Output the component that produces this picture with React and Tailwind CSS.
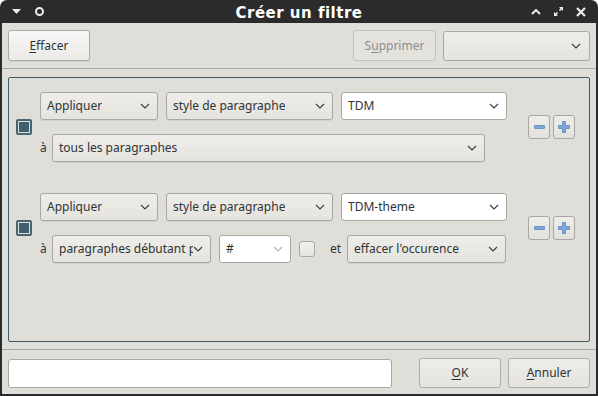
import React from 'react';

const font = { fontFamily: '"Noto Sans", "Open Sans", sans-serif' };

function Chevron({ light = false }) {
  return (
    <svg width="10" height="6" viewBox="0 0 10 6" className="shrink-0">
      <path d="M1 1 L5 5 L9 1" fill="none" stroke={light ? '#b4b3ae' : '#3a3d3e'} strokeWidth="1.1" />
    </svg>
  );
}

function Combo({ label, width, white = false, lightChevron = false }) {
  return (
    <div
      className={`h-[28px] flex items-center justify-between pl-[6px] pr-[7px] border border-[#a9a7a1] rounded-[3px] text-[12px] text-[#2e3436] overflow-hidden shrink-0 ${
        white ? 'bg-white' : 'bg-gradient-to-b from-[#eeede9] to-[#e4e3de] shadow-[0_1px_0_rgba(0,0,0,0.06)]'
      }`}
      style={{ width }}
    >
      <span className="whitespace-nowrap overflow-hidden">{label}</span>
      <Chevron light={lightChevron} />
    </div>
  );
}

function Checked() {
  return (
    <div className="w-[16px] h-[16px] border-[2px] border-[#48666f] rounded-[2px] p-[1px] bg-[#dfded8] shrink-0">
      <div className="w-full h-full bg-[#41606f]" />
    </div>
  );
}

function SmallButtons() {
  return (
    <div className="flex gap-[3px] ml-auto">
      <div className="w-[22px] h-[24px] flex items-center justify-center border border-[#a9a7a1] rounded-[3px] bg-gradient-to-b from-[#eeede9] to-[#e2e1dc]">
        <div className="w-[11px] h-[4px] bg-[#7ea6d8] border border-[#6a94c8] rounded-[1px]" />
      </div>
      <div className="w-[22px] h-[24px] flex items-center justify-center border border-[#a9a7a1] rounded-[3px] bg-gradient-to-b from-[#eeede9] to-[#e2e1dc]">
        <svg width="12" height="12" viewBox="0 0 12 12">
          <path d="M4.5 0.5h3v4h4v3h-4v4h-3v-4h-4v-3h4z" fill="#7ea6d8" stroke="#6a94c8" strokeWidth="1" />
        </svg>
      </div>
    </div>
  );
}

function Rule({ top, second }) {
  return (
    <div className="flex items-center pl-[7px] pr-[14px]">
      <Checked />
      <div className="flex flex-col gap-[14px] ml-[8px]">
        <div className="flex gap-[8px]">
          <Combo label="Appliquer" width={118} />
          <Combo label="style de paragraphe" width={167} />
          <Combo label={top} width={166} white />
        </div>
        {second}
      </div>
      <SmallButtons />
    </div>
  );
}

export default function App() {
  return (
    <div className="w-[598px] h-[396px] bg-[#2b2b2b] rounded-t-[7px] overflow-hidden flex flex-col" style={font}>
      {/* title bar */}
      <div className="h-[23px] flex items-center shrink-0 text-white">
        <div className="w-[80px] flex items-center gap-[14px] pl-[12px]">
          <svg width="9" height="6" viewBox="0 0 9 6"><path d="M0 0h9L4.5 5z" fill="#ececec" /></svg>
          <div className="w-[9px] h-[9px] rounded-full border-[2px] border-[#ececec]" />
        </div>
        <div
          className="flex-1 text-center text-[15px] font-bold leading-none pt-[3px] tracking-[0.5px]"
          style={{ fontFamily: '"DejaVu Sans", sans-serif' }}
        >
          Créer un filtre
        </div>
        <div className="w-[80px] flex items-center justify-end gap-[12px] pr-[12px]">
          <svg width="10" height="6" viewBox="0 0 10 6"><path d="M1 5 L5 1 L9 5" fill="none" stroke="#ececec" strokeWidth="2" /></svg>
          <svg width="11" height="11" viewBox="0 0 11 11">
            <path d="M6 1h4v4zM1 6v4h4z" fill="#ececec" />
            <path d="M9 2L6.5 4.5M2 9l2.5-2.5" stroke="#ececec" strokeWidth="1.6" />
          </svg>
          <svg width="10" height="10" viewBox="0 0 10 10"><path d="M1 1L9 9M9 1L1 9" stroke="#ececec" strokeWidth="2.2" /></svg>
        </div>
      </div>

      {/* body */}
      <div className="flex-1 mx-[2px] mb-[2px] bg-[#dfded8] flex flex-col text-[#2e3436]">
        <div className="flex items-center px-[6px] pt-[7px]">
          <button className="w-[82px] h-[31px] border border-[#aeaca6] rounded-[3px] bg-gradient-to-b from-[#f7f7f5] to-[#ebeae6] shadow-[0_1px_1px_rgba(0,0,0,0.08)] text-[12px]">
            <span className="underline underline-offset-2">E</span>ffacer
          </button>
          <button className="ml-auto w-[83px] h-[31px] border border-[#c4c2bc] rounded-[3px] bg-[#e3e2dd] text-[12px] text-[#8e8e8b]">
            S<span className="underline underline-offset-2">u</span>pprimer
          </button>
          <div className="ml-[7px] w-[147px] h-[30px] flex items-center justify-end pr-[8px] border border-[#a9a7a1] rounded-[3px] bg-gradient-to-b from-[#eeede9] to-[#e4e3de]">
            <Chevron />
          </div>
        </div>

        <div className="mt-[7px] h-px bg-[#aaa8a2]" />

        <div className="mx-[6px] mt-[8px] h-[265px] border border-[#3e5d69] rounded-[2px] pt-[14px] flex flex-col gap-[31px]">
          <Rule
            top="TDM"
            second={
              <div className="flex items-center">
                <span className="w-[12px] text-[12px]">à</span>
                <Combo label="tous les paragraphes" width={433} />
              </div>
            }
          />
          <Rule
            top="TDM-theme"
            second={
              <div className="flex items-center">
                <span className="w-[12px] text-[12px]">à</span>
                <Combo label="paragraphes débutant par" width={159} />
                <div className="ml-[8px]">
                  <Combo label="#" width={72} white lightChevron />
                </div>
                <div className="ml-[8px] w-[16px] h-[16px] border border-[#a9a7a1] rounded-[3px] bg-gradient-to-b from-[#f2f1ee] to-[#e6e5e1]" />
                <span className="ml-[15px] w-[17px] text-[12px]">et</span>
                <Combo label="effacer l'occurence" width={159} />
              </div>
            }
          />
        </div>

        <div className="mt-[7px] h-px bg-[#aaa8a2]" />

        <div className="flex items-center px-[6px] mt-[8px]">
          <div className="w-[384px] h-[29px] bg-white border border-[#a9a7a1] rounded-[3px]" />
          <button className="ml-auto w-[82px] h-[30px] border border-[#aeaca6] rounded-[3px] bg-gradient-to-b from-[#eeede9] to-[#e4e3de] text-[12px]">
            <span className="underline underline-offset-2">O</span>K
          </button>
          <button className="ml-[7px] w-[82px] h-[30px] border border-[#aeaca6] rounded-[3px] bg-gradient-to-b from-[#eeede9] to-[#e4e3de] text-[12px]">
            <span className="underline underline-offset-2">A</span>nnuler
          </button>
        </div>
      </div>
    </div>
  );
}
